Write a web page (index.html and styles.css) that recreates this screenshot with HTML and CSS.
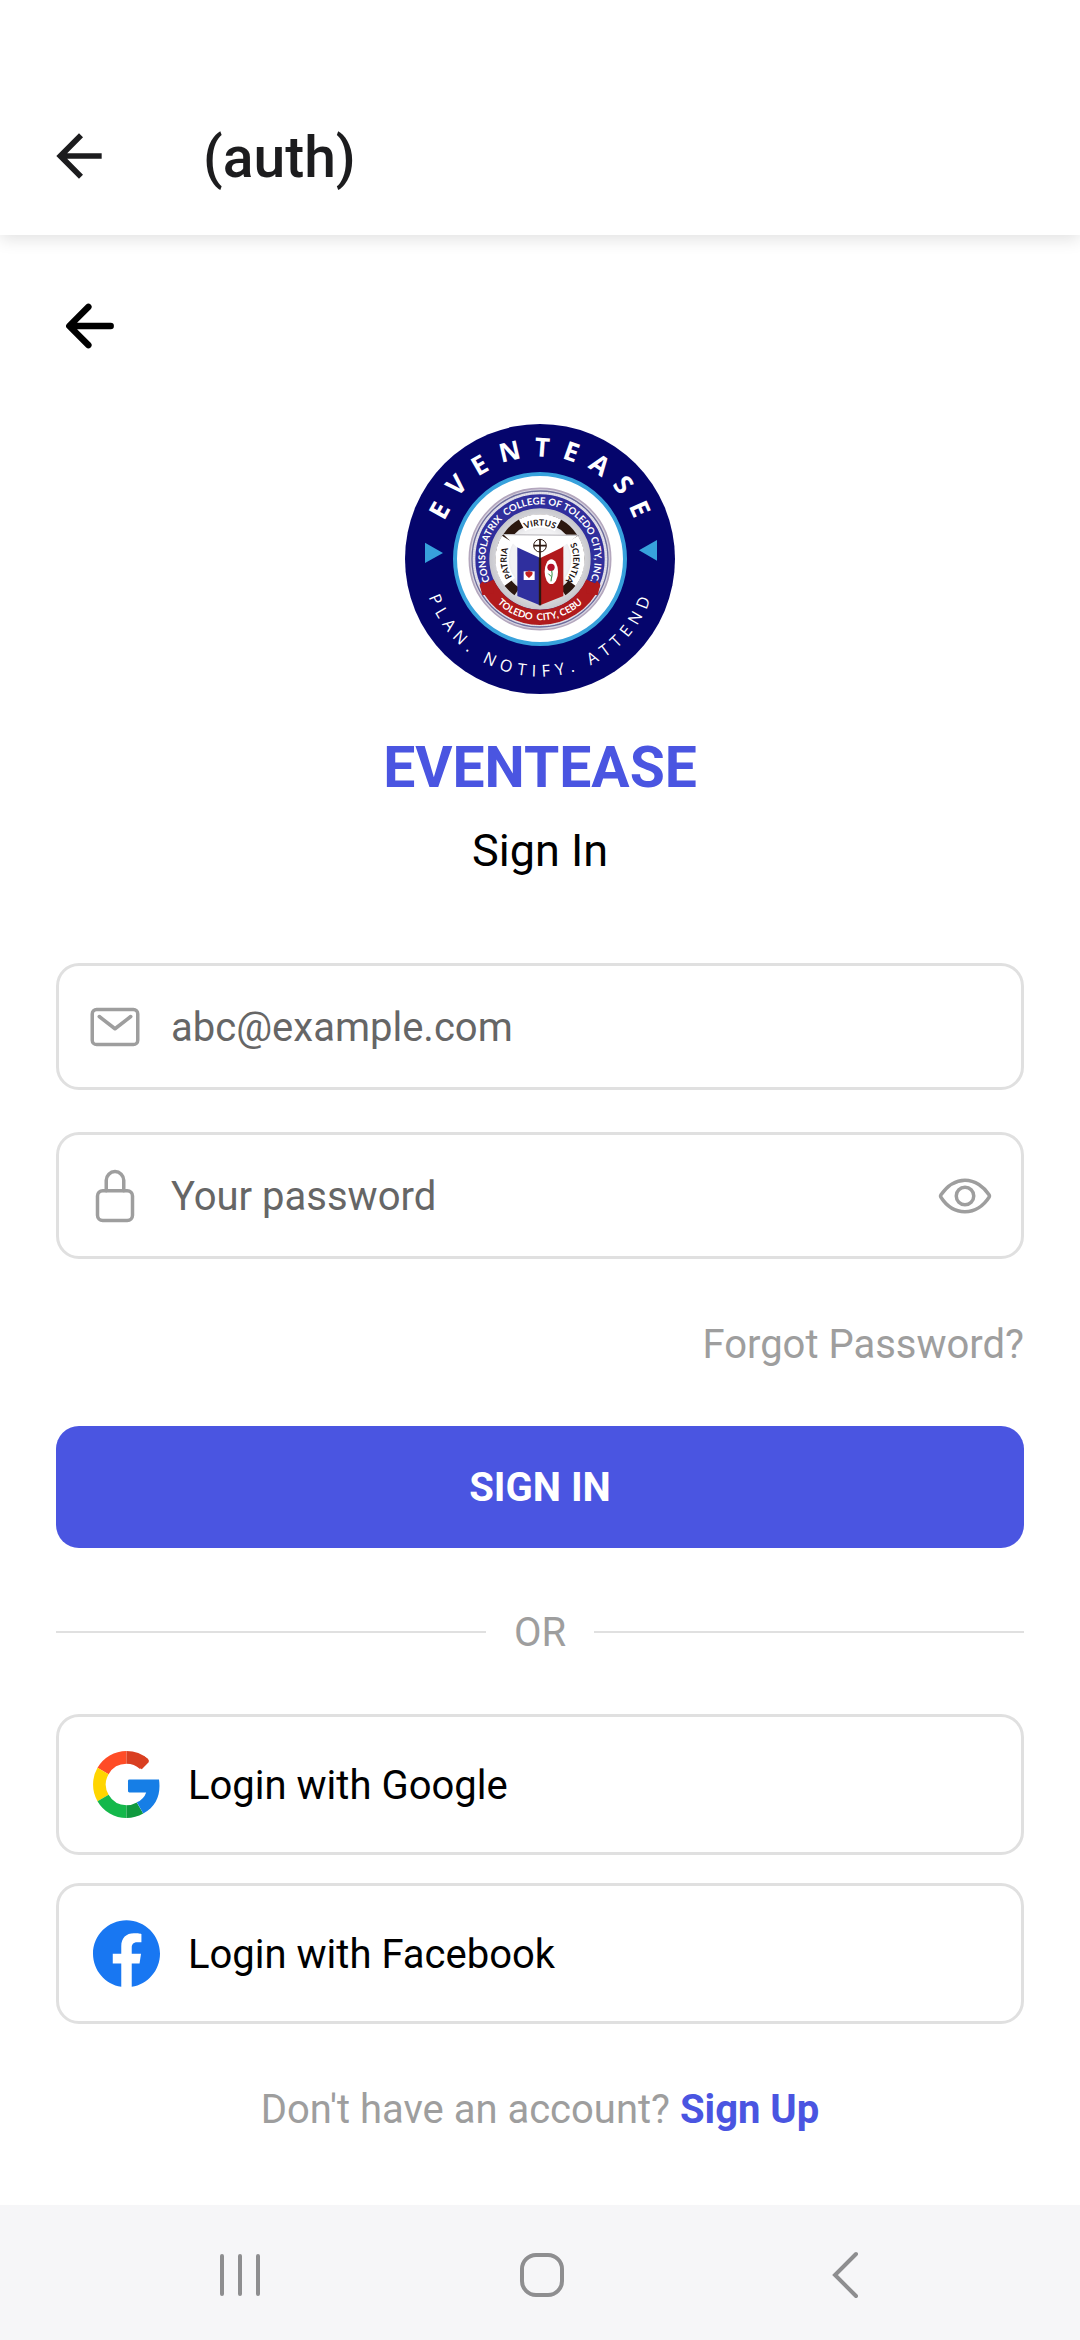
FILE: index.html
```html
<!DOCTYPE html>
<html lang="en">
<head>
<meta charset="utf-8">
<meta name="viewport" content="width=device-width, initial-scale=1">
<title>EventEase – Sign In</title>
<link rel="stylesheet" href="styles.css">
</head>
<body>
<header class="app-bar">
  <button class="icon-button" type="button" aria-label="Navigate up">
    <svg class="icon-large" viewBox="0 0 24 24" fill="#1c1c1e"><path d="M20 11H7.83l5.59-5.59L12 4l-8 8 8 8 1.41-1.41L7.83 13H20v-2z"/></svg>
  </button>
  <h1 class="app-title">(auth)</h1>
</header>

<main class="screen">
  <button class="icon-button back" type="button" aria-label="Back">
    <svg class="icon-large" viewBox="0 0 512 512" fill="none" stroke="#000" stroke-width="48" stroke-linecap="round" stroke-linejoin="round"><path d="M244 400L100 256l144-144M120 256h292"/></svg>
  </button>

  <svg class="logo" viewBox="48 42 810 810" role="img" aria-label="EventEase logo">
    <defs>
      <path id="arc-name" d="M146 447a307 307 0 0 1 614 0"/>
      <path id="arc-motto" d="M100 447a353 353 0 0 0 706 0"/>
      <path id="arc-college" d="M453 611a164 164 0 0 1 0-328a164 164 0 0 1 0 328"/>
      <path id="arc-city" d="M269 447a184 184 0 0 0 368 0"/>
      <path id="arc-words" d="M453 547a100 100 0 0 1 0-200a100 100 0 0 1 0 200"/>
      <radialGradient id="silver">
        <stop offset="0.5" stop-color="#f2f2f4"/>
        <stop offset="1" stop-color="#b9b9bf"/>
      </radialGradient>
    </defs>
    <circle cx="453" cy="447" r="405" fill="#05056c"/>
    <circle cx="453" cy="447" r="255" fill="#fff" stroke="#37a1dc" stroke-width="12"/>
    <path d="M108 398l54 31-54 30zM804 390v62l-54-31z" fill="#37a1dc"/>
    <text class="logo-name"><textPath href="#arc-name" startOffset="51.5%">EVENTEASE</textPath></text>
    <text class="logo-motto"><textPath href="#arc-motto" startOffset="50.5%">PLAN. NOTIFY. ATTEND</textPath></text>

    <circle cx="453" cy="447" r="212" fill="#d9d6e2" stroke="#b3a6bd" stroke-width="5"/>
    <circle cx="453" cy="447" r="204" fill="none" stroke="#6c6c9c" stroke-width="4"/>
    <circle cx="453" cy="447" r="198" fill="none" stroke="#e4e4ea" stroke-width="6" stroke-dasharray="4 3"/>
    <circle cx="453" cy="447" r="173" fill="url(#silver)" stroke="#302e9c" stroke-width="42"/>
    <path d="M293 518a175 175 0 0 0 320 0" fill="none" stroke="#b11a1c" stroke-width="46"/>
    <path d="M272 524l10-12 14 20 18-12v30l-34 6zM634 524l-10-12-14 20-18-12v30l34 6z" fill="#b11a1c"/>
    <text class="logo-seal"><textPath href="#arc-college" startOffset="50%">CONSOLATRIX &#160;COLLEGE OF TOLEDO CITY, INC.</textPath></text>
    <text class="logo-seal"><textPath href="#arc-city" startOffset="50%">TOLEDO &#160;CITY, CEBU</textPath></text>

    <path d="M384 545a120 120 0 1 1 138 0" fill="none" stroke="#2b170f" stroke-width="26"/>
    <g fill="none" stroke="#fff" stroke-width="40">
      <path d="M399 346a114 114 0 0 1 108 0"/>
      <path d="M362 516a114 114 0 0 1-6-128"/>
      <path d="M550 388a114 114 0 0 1-6 128"/>
    </g>
    <text class="logo-word"><textPath href="#arc-words" startOffset="50%">VIRTUS</textPath></text>
    <text class="logo-word"><textPath href="#arc-words" startOffset="23%">PATRIA</textPath></text>
    <text class="logo-word"><textPath href="#arc-words" startOffset="77%">SCIENTIA</textPath></text>

    <path d="M385 404l68 36v146l-68-28z" fill="#2f2f9e"/>
    <path d="M453 440l70-36v154l-70 28z" fill="#b11a1c"/>
    <path d="M453 420v166" stroke="#2b170f" stroke-width="7"/>
    <path d="M342 372l228 2-54 40-62 30-70-32z" fill="#fff"/>
    <path d="M344 374l226 2" stroke="#8a8790" stroke-width="2"/>
    <g fill="none" stroke="#2b170f" stroke-width="3">
      <circle cx="453" cy="407" r="19"/>
      <path d="M453 387v58M434 407h38" stroke-width="5"/>
    </g>
    <rect x="404" y="484" width="33" height="26" fill="#fff"/>
    <path d="M420 504c-20-14-8-24 0-17 8-7 20 3 0 17z" fill="#c5201c"/>
    <path d="M420 488v-8" stroke="#c5201c" stroke-width="4"/>
    <ellipse cx="487" cy="485" rx="20" ry="37" fill="#fff"/>
    <circle cx="486" cy="472" r="11" fill="#b3122a"/>
    <path d="M488 482c4 14-2 22-2 32m1-14l-9-9" fill="none" stroke="#2f8a3c" stroke-width="3"/>
  </svg>

  <h2 class="brand">EVENTEASE</h2>
  <p class="subtitle">Sign In</p>

  <form class="form" onsubmit="return false">
    <label class="field">
      <svg class="icon" viewBox="0 0 512 512"><rect x="48" y="96" width="416" height="320" rx="40"/><path d="M112 160l144 112 144-112"/></svg>
      <input class="input" type="email" placeholder="abc@example.com" aria-label="Email">
    </label>
    <div class="field">
      <svg class="icon" viewBox="0 0 512 512"><path d="M336 208v-95a80 80 0 0 0-160 0v95"/><rect x="96" y="208" width="320" height="272" rx="48"/></svg>
      <input class="input" type="password" placeholder="Your password" aria-label="Password">
      <button class="icon-button" type="button" aria-label="Show password">
        <svg class="icon" viewBox="0 0 512 512"><path d="M255.66 112c-77.94 0-157.89 45.11-220.83 135.33a16 16 0 0 0-.27 17.77C82.92 340.8 161.8 400 255.66 400c92.84 0 173.34-59.38 221.79-135.25a16.14 16.14 0 0 0 0-17.47C428.89 172.28 347.8 112 255.66 112z"/><circle cx="256" cy="256" r="80"/></svg>
      </button>
    </div>
    <a class="forgot" href="#forgot">Forgot Password?</a>
    <button class="submit" type="submit">SIGN IN</button>
  </form>

  <div class="divider"><span class="divider-label">OR</span></div>

  <div class="providers">
    <button class="provider" type="button">
      <svg class="provider-icon" viewBox="0 0 68 68">
        <g fill="none" stroke-width="13">
          <path d="M10.2 20.3A27.500 27.500 0 0 1 34 6.500" stroke="#ff4c26"/>
          <path d="M34 6.500A27.500 27.500 0 0 1 52 13.300" stroke="#d93f21"/>
          <path d="M10.200 47.700A27.500 27.500 0 0 1 10.200 20.300" stroke="#ffd500"/>
          <path d="M34 61.500A27.500 27.500 0 0 1 10.200 47.700" stroke="#14b84b"/>
          <path d="M47.700 57.800A27.500 27.500 0 0 1 34 61.500" stroke="#0f993e"/>
        </g>
        <path d="M49.500 18.500l7-7q1-2-1-3.500l-4-3-7 10z" fill="#d93f21"/>
        <path d="M37 29h30c2 14-2 27-16 34.500L44.500 52q7-3 9.500-10H37q-1.500 0-1.500-1.500v-10Q35.500 29 37 29z" fill="#167ee6"/>
      </svg>
      <span class="provider-label">Login with Google</span>
    </button>
    <button class="provider" type="button">
      <svg class="provider-icon" viewBox="0 0 24 24"><path d="M24 12.073c0-6.627-5.373-12-12-12s-12 5.373-12 12c0 5.990 4.388 10.954 10.125 11.854v-8.385H7.078v-3.470h3.047V9.430c0-3.007 1.792-4.669 4.533-4.669 1.312 0 2.686.235 2.686.235v2.953H15.830c-1.491 0-1.956.925-1.956 1.874v2.250h3.328l-.532 3.470h-2.796v8.385C19.612 23.027 24 18.062 24 12.073z" fill="#1877f2"/></svg>
      <span class="provider-label">Login with Facebook</span>
    </button>
  </div>

  <p class="signup">Don't have an account? <a href="#signup">Sign Up</a></p>
</main>

<nav class="system-nav" aria-label="System">
  <button class="icon-button" type="button" aria-label="Recent apps">
    <svg class="icon-large" viewBox="0 0 68 68"><path d="M16 15v38M34 15v38M52 15v38"/></svg>
  </button>
  <button class="icon-button" type="button" aria-label="Home">
    <svg class="icon-large" viewBox="0 0 68 68"><rect x="14" y="14" width="40" height="40" rx="14"/></svg>
  </button>
  <button class="icon-button" type="button" aria-label="Back">
    <svg class="icon-large" viewBox="0 0 68 68"><path d="M46 13L25 34l21 21"/></svg>
  </button>
</nav>
</body>
</html>
```
FILE: styles.css
```css
* {
  box-sizing: border-box;
}

body {
  display: flex;
  flex-direction: column;
  min-height: 100vh;
  margin: 0;
  background: #fff;
  color: #000;
  font: 400 40px/52px Roboto, sans-serif;
}

h1, h2, p {
  margin: 0;
}

button, input {
  font: inherit;
  color: inherit;
}

a {
  color: #4a55e1;
  text-decoration: none;
}

svg {
  display: block;
  flex: none;
}

.app-bar {
  display: flex;
  align-items: center;
  gap: 90px;
  padding: 77px 45px 0;
  height: 235px;
  box-shadow: 0 4px 16px rgba(0, 0, 0, 0.12);
}

.app-title {
  padding-top: 4px;
  color: #1c1c1e;
  font-size: 57px;
  font-weight: 500;
  line-height: 68px;
}

.icon-button {
  padding: 0;
  border: 0;
  background: none;
}

.icon-large {
  width: 68px;
  height: 68px;
}

.icon {
  width: 56px;
  height: 56px;
  fill: none;
  stroke: #9e9e9e;
  stroke-width: 32px;
  stroke-linecap: round;
  stroke-linejoin: round;
}

.screen {
  display: flex;
  flex: 1;
  flex-direction: column;
  padding: 57px 56px 0;
}

.back {
  align-self: flex-start;
}

.logo {
  align-self: center;
  width: 270px;
  height: 270px;
  margin-top: 64px;
}

.logo text {
  fill: #fff;
  text-anchor: middle;
}

.logo-name {
  font: 700 78px "Open Sans", sans-serif;
  letter-spacing: 37px;
}

.logo-motto {
  font: 400 49px "Open Sans", sans-serif;
  letter-spacing: 18px;
}

.logo-seal {
  font: 700 29px Lato, sans-serif;
}

.logo .logo-word {
  fill: #1c1210;
  font: 700 26px Lato, sans-serif;
}

.brand {
  margin-top: 40px;
  color: #4a55e1;
  font-size: 57px;
  font-weight: 700;
  line-height: 68px;
  text-align: center;
}

.subtitle {
  margin-top: 21px;
  font-size: 45px;
  line-height: 56px;
  text-align: center;
}

.form {
  display: flex;
  flex-direction: column;
  gap: 42px;
  margin-top: 84px;
}

.field {
  display: flex;
  align-items: center;
  gap: 28px;
  height: 127px;
  padding: 0 28px;
  border: 3px solid #e0e0e0;
  border-radius: 23px;
}

.input {
  flex: 1;
  min-width: 0;
  padding: 2px 0 0;
  border: 0;
  outline: 0;
  background: none;
}

.input::placeholder {
  color: #666;
  opacity: 1;
}

.forgot {
  align-self: flex-end;
  margin-top: 18px;
  color: #9e9e9e;
}

.submit {
  height: 122px;
  margin-top: 13px;
  padding: 2px 0 0;
  border: 0;
  border-radius: 23px;
  background: #4a55e1;
  color: #fff;
  font-weight: 700;
}

.divider {
  display: flex;
  align-items: center;
  gap: 28px;
  margin-top: 57px;
  color: #9e9e9e;
}

.divider::before,
.divider::after {
  flex: 1;
  height: 2px;
  background: #e0e0e0;
  content: "";
}

.divider-label,
.provider-label {
  padding-top: 2px;
}

.providers {
  display: flex;
  flex-direction: column;
  gap: 28px;
  margin-top: 55px;
}

.provider {
  display: flex;
  align-items: center;
  gap: 28px;
  height: 141px;
  padding: 0 34px;
  border: 3px solid #e0e0e0;
  border-radius: 23px;
  background: none;
}

.provider-icon {
  width: 67px;
  height: 67px;
}

.signup {
  margin-top: 60px;
  color: #9e9e9e;
  text-align: center;
}

.signup a {
  font-weight: 700;
}

.system-nav {
  display: flex;
  align-items: center;
  justify-content: space-between;
  height: 135px;
  padding: 4px 202px 0 206px;
  background: #f6f6f8;
}

.system-nav svg {
  fill: none;
  stroke: #8e8e90;
  stroke-width: 4px;
  stroke-linecap: round;
}
```
